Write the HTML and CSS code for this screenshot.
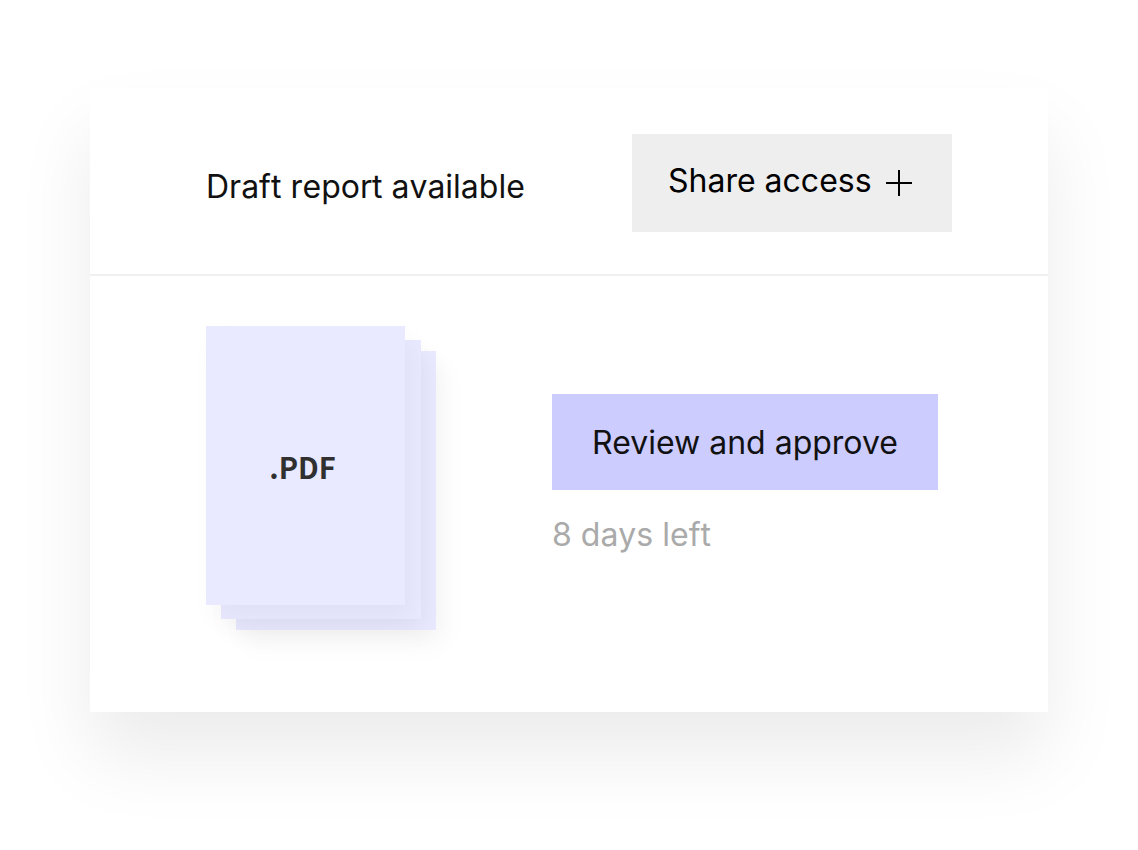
FILE: index.html
```html
<!DOCTYPE html>
<html lang="en">

<head>
    <meta charset="UTF-8">
    <meta name="viewport" content="width=device-width, initial-scale=1.0">
    <title>Draft report</title>
    <link rel="stylesheet" href="styles.css">
</head>

<body>
    <main class="report-card">
        <header class="report-card__header">
            <h1>Draft report available</h1>
            <button type="button" class="share-button">
                <span>Share access</span>
                <svg width="26" height="26" viewBox="0 0 26 26" fill="none" stroke="currentColor" stroke-width="2" aria-hidden="true">
                    <path d="M13 0v26M0 13h26" />
                </svg>
            </button>
        </header>
        <div class="report-card__body">
            <div class="document">
                <div class="sheet sheet--back"></div>
                <div class="sheet sheet--middle"></div>
                <div class="sheet sheet--front">.PDF</div>
            </div>
            <div class="actions">
                <button type="button" class="review-button">Review and approve</button>
                <p class="days-left">8 days left</p>
            </div>
        </div>
    </main>
</body>

</html>
```
FILE: styles.css
```css
* {
    box-sizing: border-box;
}

body {
    margin: 0;
    min-height: 100vh;
    padding: 88px 90px;
    background-color: #fff;
    font-family: Inter, sans-serif;
    font-size: 32px;
    line-height: 40px;
    color: #000;
}

h1,
p {
    margin: 0;
    font-size: 32px;
    font-weight: 400;
    font-kerning: none;
}

h1 {
    padding-top: 8px;
    color: #111;
}

button {
    border: none;
    font: inherit;
    color: inherit;
    cursor: pointer;
}

.report-card {
    background-color: #fff;
    box-shadow: 0 44px 72px rgba(0, 0, 0, 0.08);
}

.report-card__header {
    display: flex;
    align-items: center;
    justify-content: space-between;
    padding: 46px 96px 42px 116px;
    border-bottom: 2px solid #f0f0f0;
}

.share-button {
    display: flex;
    gap: 14px;
    width: 320px;
    height: 98px;
    padding: 27px 36px 0;
    background-color: #eee;
}

.share-button svg {
    margin-top: 9px;
}

.report-card__body {
    display: flex;
    align-items: flex-start;
    gap: 116px;
    padding: 50px 110px 82px 116px;
}

.document {
    display: grid;
    grid-template-columns: 15px 15px 169px 16px 15px;
    grid-template-rows: 14px 11px 254px 14px 11px;
}

.sheet {
    background-color: #e9e9ff;
    box-shadow: 8px 14px 24px rgba(0, 0, 0, 0.04);
}

.sheet--back {
    grid-area: 3 / 3 / 6 / 6;
}

.sheet--middle {
    grid-area: 2 / 2 / 5 / 5;
}

.sheet--front {
    grid-area: 1 / 1 / 4 / 4;
    display: flex;
    align-items: center;
    justify-content: center;
    padding-right: 6px;
    font-family: "Noto Sans CJK SC", "Noto Sans", sans-serif;
    font-size: 29px;
    font-weight: 700;
    color: #303030;
}

.actions {
    flex: 1;
    padding-top: 68px;
}

.review-button {
    width: 100%;
    height: 96px;
    padding-top: 2px;
    background-color: #ccf;
    color: #111;
}

.days-left {
    margin-top: 25px;
    color: #aaa;
}
```
